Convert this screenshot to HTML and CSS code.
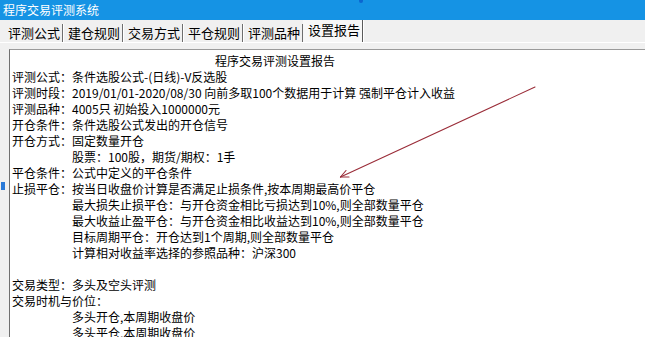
FILE: index.html
```html
<!DOCTYPE html>
<html>
<head>
<meta charset="utf-8">
<link rel="stylesheet" href="styles.css">
</head>
<body>
<div class="window">
  <div class="titlebar">程序交易评测系统<span class="dot"></span></div>
  <div class="tabs">
    <div class="tab">评测公式</div>
    <div class="tab">建仓规则</div>
    <div class="tab">交易方式</div>
    <div class="tab">平仓规则</div>
    <div class="tab">评测品种</div>
    <div class="tab active">设置报告</div>
  </div>
  <div class="body">
    <div class="marker"></div>
    <div class="panel">
      <div class="line title">程序交易评测设置报告</div>
      <div class="line"><span class="label">评测公式：</span>条件选股公式-(日线)-V反选股</div>
      <div class="line"><span class="label">评测时段：</span>2019/01/01-2020/08/30 向前多取100个数据用于计算 强制平仓计入收益</div>
      <div class="line"><span class="label">评测品种：</span>4005只 初始投入1000000元</div>
      <div class="line"><span class="label">开仓条件：</span>条件选股公式发出的开仓信号</div>
      <div class="line"><span class="label">开仓方式：</span>固定数量开仓</div>
      <div class="line indent">股票：100股，期货/期权：1手</div>
      <div class="line"><span class="label">平仓条件：</span>公式中定义的平仓条件</div>
      <div class="line"><span class="label">止损平仓：</span>按当日收盘价计算是否满足止损条件,按本周期最高价平仓</div>
      <div class="line indent">最大损失止损平仓：与开仓资金相比亏损达到10%,则全部数量平仓</div>
      <div class="line indent">最大收益止盈平仓：与开仓资金相比收益达到10%,则全部数量平仓</div>
      <div class="line indent">目标周期平仓：开仓达到1个周期,则全部数量平仓</div>
      <div class="line indent">计算相对收益率选择的参照品种：沪深300</div>
      <div class="line blank"></div>
      <div class="line"><span class="label">交易类型：</span>多头及空头评测</div>
      <div class="line">交易时机与价位：</div>
      <div class="line indent">多头开仓,本周期收盘价</div>
      <div class="line indent">多头平仓,本周期收盘价</div>
    </div>
  </div>
  <svg class="arrow" width="645" height="337" viewBox="0 0 645 337">
    <g stroke="#9a2c38" stroke-width="1.1" fill="none" stroke-linecap="round">
      <line x1="535" y1="87" x2="340.5" y2="177"/>
      <line x1="340.5" y1="177" x2="346" y2="170.5"/>
      <line x1="340.5" y1="177" x2="349" y2="177"/>
    </g>
  </svg>
</div>
</body>
</html>
```
FILE: styles.css
```css
html, body {
  margin: 0;
  padding: 0;
}
body {
  width: 645px;
  height: 337px;
  overflow: hidden;
  background: #f0f0f0;
  font-family: "Noto Sans CJK SC", "Noto Sans", sans-serif;
}
.window {
  position: relative;
  width: 645px;
  height: 337px;
  overflow: hidden;
  display: flex;
  flex-direction: column;
}
.titlebar {
  position: relative;
  height: 20px;
  line-height: 19px;
  background: #1593e4;
  color: #ffffff;
  font-size: 12px;
  padding-left: 3px;
  flex: none;
}
.dot {
  position: absolute;
  left: 359px;
  top: 0;
  width: 4px;
  height: 3px;
  border-radius: 0 0 2px 2px;
  background: #0b66d0;
}
.tabs {
  flex: none;
  height: 22px;
  display: flex;
  padding-left: 3px;
  border-bottom: 1px solid #ffffff;
  font-size: 13px;
  color: #000;
}
.tab {
  height: 18px;
  margin-top: 4px;
  line-height: 18px;
  padding: 0 2px 0 5px;
  border-right: 1px solid #6e6e6e;
  box-shadow: 1px 0 0 #ffffff;
  white-space: nowrap;
}
.tab.active {
  height: 22px;
  margin-top: 0;
  line-height: 20px;
  background: #f7f7f7;
  border-right: 1px solid #5a5a5a;
}
.body {
  position: relative;
  flex: 1;
  display: flex;
  padding-top: 6px;
}
.marker {
  position: absolute;
  left: 1px;
  top: 139px;
  width: 4px;
  height: 8px;
  background: #2a7ad8;
}
.panel {
  flex: 1;
  margin-left: 9px;
  background: #ffffff;
  border-top: 1px solid #9a9a9a;
  border-left: 1px solid #707070;
  padding: 3px 0 0 2px;
  font-size: 12px;
  color: #000;
}
.line {
  height: 16px;
  line-height: 16px;
  white-space: nowrap;
}
.label {
  display: inline-block;
  width: 60px;
}
.indent {
  padding-left: 60px;
}
.title {
  padding-left: 203px;
}
.arrow {
  position: absolute;
  left: 0;
  top: 0;
  pointer-events: none;
}
```
